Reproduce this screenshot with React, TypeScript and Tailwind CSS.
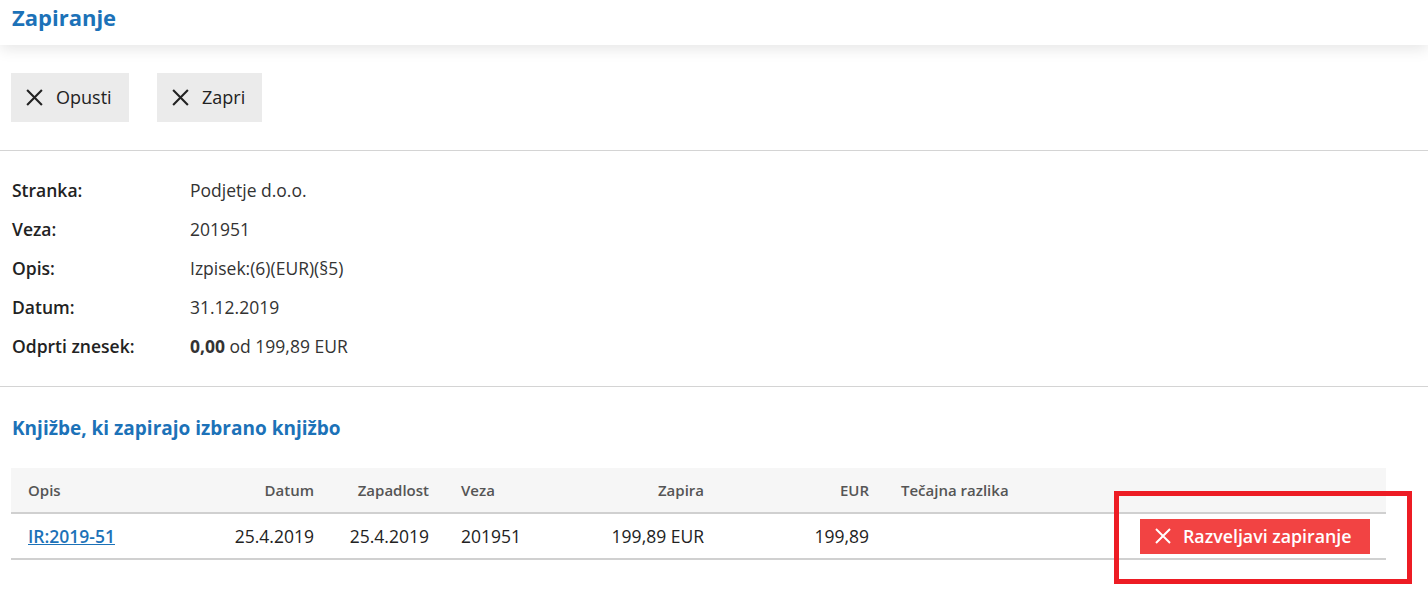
import React from 'react';

const XIcon: React.FC<{ className?: string }> = ({ className }) => (
    <svg viewBox="0 0 20 20" className={className} fill="none" stroke="currentColor" strokeWidth={2.2} strokeLinecap="square">
        <path d="M3 3L17 17M17 3L3 17" />
    </svg>
);

const details: { label: string; value: React.ReactNode }[] = [
    { label: 'Stranka:', value: 'Podjetje d.o.o.' },
    { label: 'Veza:', value: '201951' },
    { label: 'Opis:', value: 'Izpisek:(6)(EUR)(§5)' },
    { label: 'Datum:', value: '31.12.2019' },
    {
        label: 'Odprti znesek:',
        value: (
            <>
                <span className="font-bold">0,00</span> od 199,89 EUR
            </>
        ),
    },
];

const App: React.FC = () => {
    return (
        <div className="relative min-h-[593px] bg-white text-[#222] font-['Open_Sans',sans-serif]">
            {/* header */}
            <div className="h-[45px] bg-white px-3 pt-[2px] shadow-[0_4px_14px_rgba(0,0,0,0.10)] relative z-10">
                <h1 className="text-[22px] leading-[30px] font-bold text-[#1c72b8]">Zapiranje</h1>
            </div>

            {/* toolbar */}
            <div className="flex gap-7 px-[11px] py-7">
                <button className="flex items-center gap-3 h-[49px] w-[118px] pl-[14px] bg-[#ebebeb] text-[18px] text-[#222]">
                    <XIcon className="w-[19px] h-[19px]" />
                    Opusti
                </button>
                <button className="flex items-center gap-3 h-[49px] w-[105px] pl-[14px] bg-[#ebebeb] text-[18px] text-[#222]">
                    <XIcon className="w-[19px] h-[19px]" />
                    Zapri
                </button>
            </div>

            <div className="border-t border-[#d4d4d4]" />

            {/* details */}
            <div className="px-3 py-5">
                {details.map(d => (
                    <div key={d.label} className="flex h-[39px] items-center text-[17.5px]">
                        <div className="w-[178px] font-semibold text-[#222]">{d.label}</div>
                        <div className="text-[#333]">{d.value}</div>
                    </div>
                ))}
            </div>

            <div className="border-t border-[#d4d4d4]" />

            {/* closing entries */}
            <div className="px-[11px] pt-7">
                <h2 className="pl-px text-[19px] leading-[27px] font-bold text-[#1c72b8]">Knjižbe, ki zapirajo izbrano knjižbo</h2>
                <table className="mt-[26px] w-[1375px] table-fixed border-collapse">
                    <colgroup>
                        <col className="w-[199px]" />
                        <col className="w-[120px]" />
                        <col className="w-[115px]" />
                        <col className="w-[115px]" />
                        <col className="w-[160px]" />
                        <col className="w-[165px]" />
                        <col className="w-[215px]" />
                        <col />
                    </colgroup>
                    <thead>
                        <tr className="h-[45px] bg-[#f6f6f6] border-b-2 border-[#d0d0d0] text-[15px] font-semibold text-[#555]">
                            <th className="px-4 pl-[17px] text-left font-semibold">Opis</th>
                            <th className="px-4 text-right font-semibold">Datum</th>
                            <th className="px-4 text-right font-semibold">Zapadlost</th>
                            <th className="px-4 text-left font-semibold">Veza</th>
                            <th className="px-4 text-right font-semibold">Zapira</th>
                            <th className="px-4 text-right font-semibold">EUR</th>
                            <th className="px-4 text-left font-semibold">Tečajna razlika</th>
                            <th />
                        </tr>
                    </thead>
                    <tbody>
                        <tr className="h-[46px] border-b-2 border-[#d0d0d0] text-[17.5px] text-[#222]">
                            <td className="px-4 pl-[17px]">
                                <a href="#" className="font-semibold text-[#1c72b8] underline">IR:2019-51</a>
                            </td>
                            <td className="px-4 text-right">25.4.2019</td>
                            <td className="px-4 text-right">25.4.2019</td>
                            <td className="px-4">201951</td>
                            <td className="px-4 text-right">199,89 EUR</td>
                            <td className="px-4 text-right">199,89</td>
                            <td className="px-4" />
                            <td className="px-4 text-right">
                                <button className="ml-auto flex h-[35px] w-[230px] items-center gap-[11px] pl-[14px] bg-[#f24343] text-[17.8px] font-semibold text-white">
                                    <XIcon className="w-[18px] h-[18px]" />
                                    Razveljavi zapiranje
                                </button>
                            </td>
                        </tr>
                    </tbody>
                </table>
            </div>

            {/* highlight annotation */}
            <div className="absolute left-[1114px] top-[491px] w-[298px] h-[93px] border-[5px] border-[#ed1c24] pointer-events-none" />
        </div>
    );
};

export default App;
